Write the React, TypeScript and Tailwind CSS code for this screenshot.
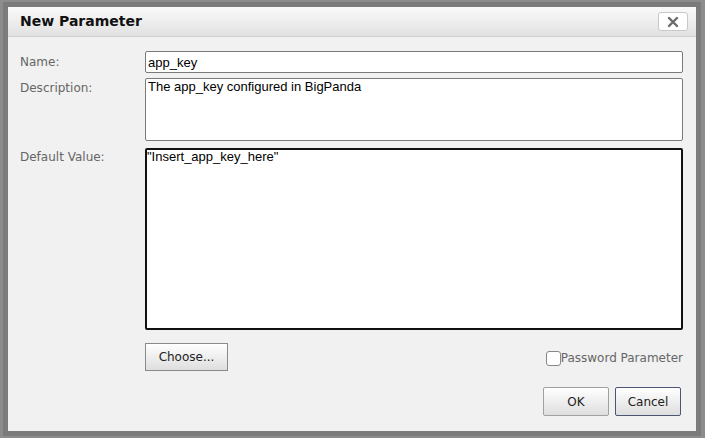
export default function App() {
  const label = "text-[12px] text-[#666666]";
  const field =
    "w-full bg-white rounded-[2px] text-[13px] text-black outline-none resize-none";

  return (
    <div
      className="w-[705px] h-[438px] bg-[#8c8c8c] pl-[8px] pt-[7px] overflow-hidden"
      style={{ fontFamily: '"DejaVu Sans", Verdana, sans-serif' }}
    >
      <div className="w-[688px] h-[424px] bg-[#f1f1f1] flex flex-col shadow-[0_0_0_5px_rgba(0,0,0,0.12)]">
        {/* Header */}
        <div className="h-[30px] flex items-center justify-between pl-[12px] pr-[8px] bg-gradient-to-b from-[#fafafa] to-[#e1e1e1] border-b border-[#d0d0d0]">
          <span className="text-[14px] font-bold text-[#111111]">New Parameter</span>
          <button className="w-[30px] h-[19px] flex items-center justify-center bg-white border border-[#c8c8c8] rounded-[3px]">
            <svg width="12" height="12" viewBox="0 0 12 12">
              <path
                d="M2 2 L10 10 M10 2 L2 10"
                stroke="#6a6a6a"
                strokeWidth="2.4"
                strokeLinecap="round"
              />
            </svg>
          </button>
        </div>

        {/* Body */}
        <div className="flex-1 pl-[12px] pr-[13px] pt-[14px] flex flex-col">
          <div className="grid grid-cols-[125px_1fr] gap-y-[5px]">
            <div className={`${label} pt-[2px]`}>Name:</div>
            <input
              readOnly
              value="app_key"
              className={`${field} h-[22px] px-[2px] border border-[#7a7a7a]`}
              style={{ fontFamily: '"Liberation Sans", Arial, sans-serif' }}
            />
            <div className={`${label} pt-[1px]`}>Description:</div>
            <textarea
              readOnly
              value="The app_key configured in BigPanda"
              className={`${field} h-[63px] px-[2px] py-0 border border-[#7a7a7a] leading-[16px]`}
              style={{ fontFamily: '"Liberation Sans", Arial, sans-serif' }}
            />
            <div className={`${label} mt-[2px]`}>Default Value:</div>
            <textarea
              readOnly
              value={'"Insert_app_key_here"'}
              className={`${field} h-[182px] mt-[2px] p-0 border-2 border-[#111111] leading-[14px]`}
              style={{ fontFamily: '"Liberation Sans", Arial, sans-serif' }}
            />
          </div>

          <div className="grid grid-cols-[125px_1fr] mt-[13px]">
            <div />
            <div className="flex items-start justify-between">
              <button className="w-[83px] h-[28px] border border-[#8a8a8a] bg-gradient-to-b from-white to-[#dedede] text-[12px] text-[#222222]">
                Choose...
              </button>
              <label className="flex items-center mt-[6px] text-[12px] text-[#666666]">
                <span className="w-[15px] h-[15px] bg-white border border-[#888888] rounded-[3px]" />
                Password Parameter
              </label>
            </div>
          </div>

          <div className="flex justify-end gap-[6px] mt-[16px] pr-[2px]">
            <button className="w-[66px] h-[29px] border border-[#a0a0a0] rounded-[2px] bg-gradient-to-b from-white to-[#dedede] text-[12px] text-[#222222]">
              OK
            </button>
            <button className="w-[66px] h-[29px] border border-[#4a5577] rounded-[2px] bg-gradient-to-b from-white to-[#dedede] text-[12px] text-[#222222]">
              Cancel
            </button>
          </div>
        </div>
      </div>
    </div>
  );
}
